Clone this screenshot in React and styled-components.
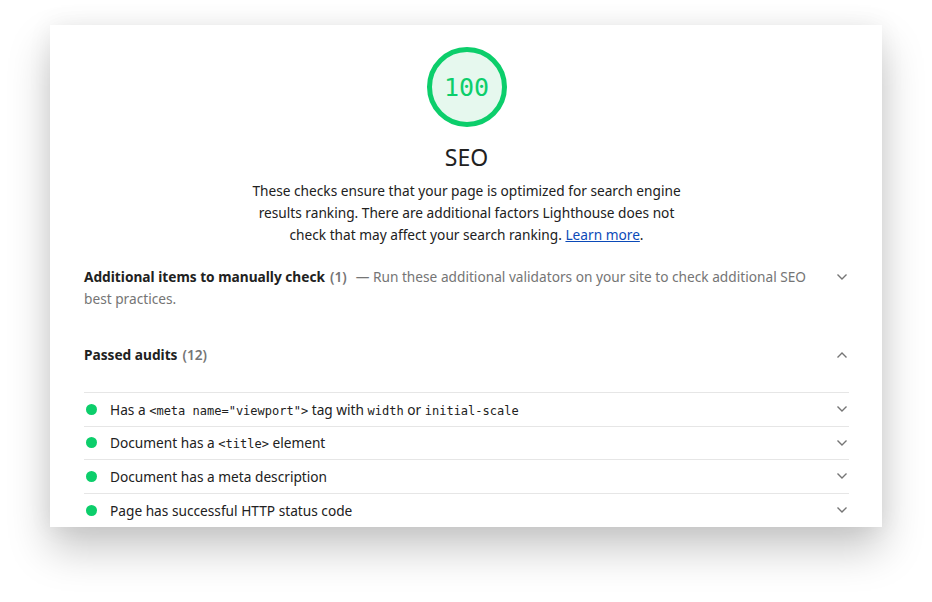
import React from 'react';
import styled, {createGlobalStyle} from 'styled-components';

const GlobalStyle = createGlobalStyle`
  html, body {
    margin: 0;
    padding: 0;
    background: #ffffff;
  }
  body {
    font-family: "Noto Sans", "Open Sans", sans-serif;
    color: #212121;
  }
`;

const audits = [
    {
        id: 'viewport',
        parts: ['Has a ', {code: '<meta name="viewport">'}, ' tag with ', {code: 'width'}, ' or ', {code: 'initial-scale'}],
    },
    {id: 'title', parts: ['Document has a ', {code: '<title>'}, ' element']},
    {id: 'meta', parts: ['Document has a meta description']},
    {id: 'http', parts: ['Page has successful HTTP status code']},
];

const Chevron = ({up}) => (
    <ChevronSvg viewBox="0 0 12 8" $up={up}>
        <path d="M1.5 1.5 L6 6 L10.5 1.5" fill="none" stroke="#757575" strokeWidth="1.4"/>
    </ChevronSvg>
);

const Gauge = ({score}) => (
    <GaugeWrap>
        <svg width="82" height="82" viewBox="0 0 82 82">
            <circle cx="41" cy="41" r="37.5" fill="#e6f8ee" stroke="#0cce6b" strokeWidth="5"/>
        </svg>
        <GaugeScore>{score}</GaugeScore>
    </GaugeWrap>
);

const App = () => {
    return (
        <>
            <GlobalStyle/>
            <Page>
                <Card>
                    <Header>
                        <Gauge score={100}/>
                        <Title>SEO</Title>
                        <Description>
                            These checks ensure that your page is optimized for search engine results ranking.
                            There are additional factors Lighthouse does not check that may affect your search
                            ranking. <LearnMore href="#">Learn more</LearnMore>.
                        </Description>
                    </Header>

                    <Group>
                        <GroupText>
                            <GroupTitle>Additional items to manually check</GroupTitle>
                            <Count>(1)</Count>
                            <GroupDesc>
                                — Run these additional validators on your site to check additional SEO
                                best practices.
                            </GroupDesc>
                        </GroupText>
                        <Chevron/>
                    </Group>

                    <Group $passed>
                        <GroupText>
                            <GroupTitle>Passed audits</GroupTitle>
                            <Count>(12)</Count>
                        </GroupText>
                        <Chevron up/>
                    </Group>

                    <AuditList>
                        {audits.map((audit) => (
                            <AuditRow key={audit.id}>
                                <Dot/>
                                <AuditTitle>
                                    {audit.parts.map((p, i) =>
                                        typeof p === 'string' ? p : <Code key={i}>{p.code}</Code>
                                    )}
                                </AuditTitle>
                                <Chevron/>
                            </AuditRow>
                        ))}
                    </AuditList>
                </Card>
            </Page>
        </>
    );
};

const Page = styled.div`
  width: 932px;
  height: 602px;
  box-sizing: border-box;
  padding: 25px 50px 0 50px;
  overflow: hidden;
`;

const Card = styled.div`
  width: 832px;
  height: 502px;
  box-sizing: border-box;
  background: #ffffff;
  padding: 21px 33px 0 34px;
  overflow: hidden;
  box-shadow: 0 22px 40px rgba(0, 0, 0, 0.22), 0 0 24px rgba(0, 0, 0, 0.06);
`;

const Header = styled.div`
  display: flex;
  flex-direction: column;
  align-items: center;
`;

const GaugeWrap = styled.div`
  position: relative;
  width: 82px;
  height: 82px;

  svg {
    display: block;
  }
`;

const GaugeScore = styled.div`
  position: absolute;
  inset: 0;
  display: flex;
  align-items: center;
  justify-content: center;
  font-family: "DejaVu Sans Mono", "Liberation Mono", monospace;
  font-size: 25px;
  color: #0cce6b;
`;

const Title = styled.div`
  font-size: 23px;
  line-height: 30px;
  margin-top: 14px;
  color: #212121;
`;

const Description = styled.p`
  margin: 8px 0 0 0;
  width: 450px;
  font-size: 13.7px;
  line-height: 22px;
  text-align: center;
  color: #212121;
`;

const LearnMore = styled.a`
  color: #0b4ab8;
  text-decoration: underline;
`;

const Group = styled.div`
  display: flex;
  align-items: flex-start;
  justify-content: space-between;
  margin-top: ${(props) => (props.$passed ? '34px' : '20px')};
  padding-bottom: ${(props) => (props.$passed ? '26px' : '0')};
`;

const GroupText = styled.div`
  flex: 1;
  font-size: 13.7px;
  line-height: 22px;
  padding-right: 14px;
`;

const GroupTitle = styled.span`
  font-weight: 700;
  color: #212121;
`;

const Count = styled.span`
  font-weight: 600;
  color: #757575;
  margin-left: 5px;
`;

const GroupDesc = styled.span`
  color: #757575;
  margin-left: 9px;
`;

const ChevronSvg = styled.svg`
  width: 12px;
  height: 8px;
  margin-top: 7px;
  margin-right: 1px;
  flex-shrink: 0;
  transform: ${(props) => (props.$up ? 'rotate(180deg)' : 'none')};
`;

const AuditList = styled.div`
  display: flex;
  flex-direction: column;
`;

const AuditRow = styled.div`
  display: flex;
  align-items: center;
  box-sizing: border-box;
  height: 33.6px;
  border-top: 1px solid #e6e6e6;

  ${ChevronSvg} {
    margin-top: 0;
  }
`;

const Dot = styled.span`
  width: 11px;
  height: 11px;
  border-radius: 50%;
  background: #0cce6b;
  margin-left: 2px;
  margin-right: 13px;
  flex-shrink: 0;
`;

const AuditTitle = styled.div`
  flex: 1;
  font-size: 13.7px;
  color: #212121;
`;

const Code = styled.code`
  font-family: "DejaVu Sans Mono", "Liberation Mono", monospace;
  font-size: 12px;
`;

export default App;
